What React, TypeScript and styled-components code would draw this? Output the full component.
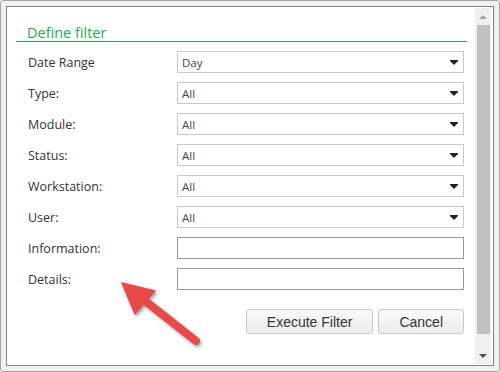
import React from "react";
import styled, { createGlobalStyle } from "styled-components";

const Global = createGlobalStyle`
  html, body { margin: 0; padding: 0; background: #ffffff; }
  body { font-family: "Open Sans", "Noto Sans", sans-serif; }
  * { box-sizing: border-box; }
`;

const Frame = styled.div`
  position: relative;
  width: 500px;
  height: 372px;
  background: #f0f0f0;
  border: 1px solid #a4a4a4;
  border-radius: 3px;
  padding: 5px;
`;

const Inner = styled.div`
  width: 100%;
  height: 100%;
  background: #ffffff;
  border: 1px solid #858585;
  display: flex;
`;

const Content = styled.div`
  flex: 1;
  display: flex;
  flex-direction: column;
`;

const Header = styled.div`
  margin: 0 8px 0 9px;
  padding: 17px 0 0 11px;
  border-bottom: 1px solid #2f9e5f;
  color: #1fab4f;
  font-size: 14.5px;
  line-height: 17px;
`;

const Form = styled.div`
  display: flex;
  flex-direction: column;
  gap: 9px;
  padding: 8px 0 0 21px;
`;

const Row = styled.div`
  display: grid;
  grid-template-columns: 149px 287px;
  align-items: center;
  height: 22px;
`;

const Label = styled.div`
  font-size: 12.5px;
  color: #333333;
  line-height: 20px;
  padding-top: 3px;
`;

const SelectBox = styled.div`
  height: 22px;
  border: 1px solid #c9c9c9;
  background: #ffffff;
  display: flex;
  align-items: center;
  justify-content: space-between;
  padding: 1px 5px 0 4px;
  font-size: 11.5px;
  color: #444444;
`;

const TextBox = styled.input`
  height: 22px;
  width: 100%;
  border: 1px solid #9a9a9a;
  background: #ffffff;
  margin: 0;
  padding: 0 4px;
  outline: none;
`;

const Buttons = styled.div`
  display: flex;
  justify-content: flex-end;
  gap: 5px;
  padding: 20px 11px 0 0;
`;

const Button = styled.button`
  height: 25px;
  padding: 0 20px;
  border: 1px solid #c8c8c8;
  border-radius: 3px;
  background: linear-gradient(#fafafa, #ececec);
  font-family: "Liberation Sans", Arial, sans-serif;
  font-size: 14px;
  color: #333333;
`;

const Scrollbar = styled.div`
  width: 16px;
  margin: 1px 2px 1px 0;
  background: #f0f0f0;
  display: flex;
  flex-direction: column;
  align-items: center;
`;

const ScrollButton = styled.div`
  height: 17px;
  width: 100%;
  display: flex;
  align-items: center;
  justify-content: center;
`;

const Track = styled.div`
  flex: 1;
  width: 100%;
  padding: 0 1px 13px 2px;
  display: flex;
`;

const Thumb = styled.div`
  flex: 1;
  background: #c1c1c1;
`;

const Annotation = styled.svg`
  position: absolute;
  left: 0;
  top: 0;
  pointer-events: none;
`;

const Caret = () => (
  <svg width="8" height="5" viewBox="0 0 8 5">
    <path d="M0 0H8V1L4 5L0 1Z" fill="#222222" />
  </svg>
);

const selects = [
  ["Date Range", "Day"],
  ["Type:", "All"],
  ["Module:", "All"],
  ["Status:", "All"],
  ["Workstation:", "All"],
  ["User:", "All"],
];

export default function App() {
  return (
    <>
      <Global />
      <Frame>
        <Inner>
          <Content>
            <Header>Define filter</Header>
            <Form>
              {selects.map(([label, value]) => (
                <Row key={label}>
                  <Label>{label}</Label>
                  <SelectBox>
                    <span>{value}</span>
                    <Caret />
                  </SelectBox>
                </Row>
              ))}
              <Row>
                <Label>Information:</Label>
                <TextBox />
              </Row>
              <Row>
                <Label>Details:</Label>
                <TextBox />
              </Row>
            </Form>
            <Buttons>
              <Button>Execute Filter</Button>
              <Button>Cancel</Button>
            </Buttons>
          </Content>
          <Scrollbar>
            <ScrollButton>
              <svg width="8" height="4" viewBox="0 0 8 4">
                <path d="M4 0L8 4H0Z" fill="#a3a3a3" />
              </svg>
            </ScrollButton>
            <Track>
              <Thumb />
            </Track>
            <ScrollButton>
              <svg width="8" height="4" viewBox="0 0 8 4">
                <path d="M0 0H8L4 4Z" fill="#505050" />
              </svg>
            </ScrollButton>
          </Scrollbar>
        </Inner>
        <Annotation width="500" height="372" viewBox="0 0 500 372">
          <defs>
            <filter id="sh" x="-20%" y="-20%" width="150%" height="150%">
              <feDropShadow dx="1.5" dy="2" stdDeviation="1.5" floodColor="#000" floodOpacity="0.35" />
            </filter>
          </defs>
          <g filter="url(#sh)">
            <line x1="143" y1="299" x2="195" y2="340" stroke="#e84a4a" strokeWidth="8" strokeLinecap="round" />
            <path d="M121 282L154 290L134 313Z" fill="#e84a4a" stroke="#e84a4a" strokeWidth="1.5" strokeLinejoin="round" />
          </g>
        </Annotation>
      </Frame>
    </>
  );
}
